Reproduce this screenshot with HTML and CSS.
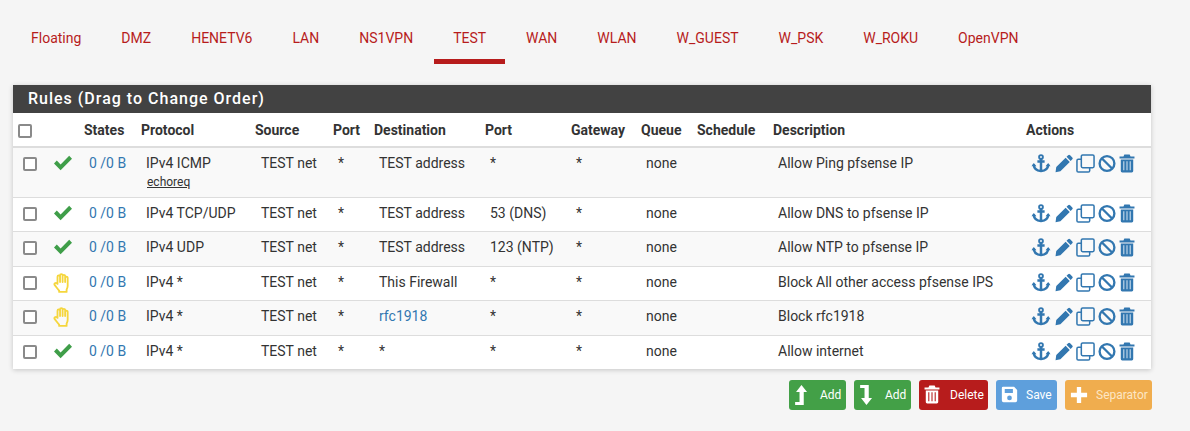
FILE: index.html
```html
<!DOCTYPE html>
<html lang="en">
<head>
<meta charset="UTF-8" />
<title>Firewall: Rules: TEST</title>
<link rel="stylesheet" href="styles.css">
</head>
<body>

<svg class="defs" width="0" height="0">
  <symbol id="i-check" viewBox="0 0 20 16"><path d="M1 8.5 L3.8 5.6 L7.6 9.4 L16.2 .8 L19 3.7 L7.6 15.2 Z"/></symbol>
  <symbol id="i-hand" viewBox="0 0 18 22"><path fill="none" stroke="currentColor" stroke-width="2" stroke-linejoin="round" stroke-linecap="round" d="M4.6 12 V4 a1.4 1.4 0 0 1 2.8 0 V2.6 a1.4 1.4 0 0 1 2.8 0 V3.4 a1.4 1.4 0 0 1 2.8 0 V5.4 a1.4 1.4 0 0 1 2.8 0 V14 c0 2 -.6 3 -1.2 4.4 V20.8 H6.4 V19.4 C4.6 17.4 3.2 15.4 1.6 13.4 C.4 11.8 2.6 10 4 11.4 L4.6 12 M7.4 4 V10 M10.2 3.4 V10 M13 4.4 V10"/></symbol>
  <symbol id="i-anchor" viewBox="0 0 20 20"><g fill="none" stroke="currentColor"><circle cx="10" cy="3.2" r="2" stroke-width="2"/><path stroke-width="2.6" d="M10 5 V18 M6.2 7.8 H13.8"/><path stroke-width="2.6" d="M2.4 11 C2.6 15.4 6 17.6 10 17.9 C14 17.6 17.4 15.4 17.6 11"/></g><path d="M0 13 L2.4 9.4 L5.2 13 Z M14.8 13 L17.6 9.4 L20 13 Z"/></symbol>
  <symbol id="i-pencil" viewBox="0 0 20 20"><path d="M14.6 .8 a1.6 1.6 0 0 1 2.2 0 L19.2 3.2 a1.6 1.6 0 0 1 0 2.2 L17.4 7.2 L12.8 2.6 Z M11.8 3.6 L16.4 8.2 L6 18.6 L.6 19.6 L1.4 14 Z"/></symbol>
  <symbol id="i-clone" viewBox="0 0 20 20"><g fill="none" stroke="currentColor" stroke-width="1.6"><rect x="5.6" y="1" width="13.4" height="13.4" rx="1.4"/><path d="M5.6 5.6 H2.4 A1.4 1.4 0 0 0 1 7 V17.6 A1.4 1.4 0 0 0 2.4 19 H13 A1.4 1.4 0 0 0 14.4 17.6 V14.4"/></g></symbol>
  <symbol id="i-ban" viewBox="0 0 20 20"><g fill="none" stroke="currentColor" stroke-width="2.6"><circle cx="10" cy="10" r="8.2"/><path d="M4.4 4.4 L15.6 15.6"/></g></symbol>
  <symbol id="i-trash" viewBox="0 0 18 20"><path d="M6 0 H12 L13 2 H17.4 V4.4 H.6 V2 H5 Z M2 5.4 H16 V18.4 A1.6 1.6 0 0 1 14.4 20 H3.6 A1.6 1.6 0 0 1 2 18.4 Z"/><path fill="#cfe0ef" d="M4.8 7.4 H6 V17.6 H4.8 Z M8.4 7.4 H9.6 V17.6 H8.4 Z M12 7.4 H13.2 V17.6 H12 Z"/></symbol>
  <symbol id="i-trash-btn" viewBox="0 0 18 20"><path d="M6 0 H12 L13 2 H17.4 V4.4 H.6 V2 H5 Z M2 5.4 H16 V18.4 A1.6 1.6 0 0 1 14.4 20 H3.6 A1.6 1.6 0 0 1 2 18.4 Z"/><path fill="#b71c1c" d="M4.8 7.4 H6 V17.6 H4.8 Z M8.4 7.4 H9.6 V17.6 H8.4 Z M12 7.4 H13.2 V17.6 H12 Z"/></symbol>
  <symbol id="i-up" viewBox="0 0 14 24"><path d="M7.5 1 L13.6 8.6 H10 V23 H.6 V19.6 H5.4 V8.6 H1.6 Z"/></symbol>
  <symbol id="i-down" viewBox="0 0 14 24"><path d="M.6 1 H10 V15.4 H13.6 L7.5 23 L1.6 15.4 H5.4 V4.4 H.6 Z"/></symbol>
  <symbol id="i-save" viewBox="0 0 20 20"><path fill-rule="evenodd" d="M2.4 1 H15.4 L19 4.6 V17 A2 2 0 0 1 17 19 H3 A2 2 0 0 1 1 17 V2.4 A1.4 1.4 0 0 1 2.4 1 Z M4.4 3.4 V8.2 H14 V3.4 Z M10 11.2 A2.8 2.8 0 1 0 10 16.8 A2.8 2.8 0 1 0 10 11.2 Z"/></symbol>
  <symbol id="i-plus" viewBox="0 0 20 20"><path d="M7.6 1 H12.4 V7.6 H19 V12.4 H12.4 V19 H7.6 V12.4 H1 V7.6 H7.6 Z"/></symbol>
</svg>

<nav class="tabs">
  <a href="#">Floating</a>
  <a href="#">DMZ</a>
  <a href="#">HENETV6</a>
  <a href="#">LAN</a>
  <a href="#">NS1VPN</a>
  <a href="#" class="active">TEST</a>
  <a href="#">WAN</a>
  <a href="#">WLAN</a>
  <a href="#">W_GUEST</a>
  <a href="#">W_PSK</a>
  <a href="#">W_ROKU</a>
  <a href="#">OpenVPN</a>
</nav>

<div class="container">
  <div class="panel">
    <h2 class="panel-title">Rules (Drag to Change Order)</h2>
    <table class="rules">
      <colgroup>
        <col class="c-sel"><col class="c-stat"><col class="c-states"><col class="c-proto"><col class="c-src">
        <col class="c-port"><col class="c-dest"><col class="c-dport"><col class="c-gw"><col class="c-queue">
        <col class="c-sched"><col class="c-desc"><col class="c-act">
      </colgroup>
      <thead>
        <tr>
          <th><span class="cb"></span></th>
          <th></th>
          <th>States</th>
          <th>Protocol</th>
          <th>Source</th>
          <th>Port</th>
          <th>Destination</th>
          <th>Port</th>
          <th>Gateway</th>
          <th>Queue</th>
          <th>Schedule</th>
          <th>Description</th>
          <th>Actions</th>
        </tr>
      </thead>
      <tbody id="rule-rows"></tbody>
    </table>
  </div>

  <div class="buttons">
    <a href="#" class="btn green"><svg class="ico-up"><use href="#i-up"/></svg>Add</a>
    <a href="#" class="btn green"><svg class="ico-up"><use href="#i-down"/></svg>Add</a>
    <a href="#" class="btn red"><svg class="ico-trash"><use href="#i-trash-btn"/></svg>Delete</a>
    <a href="#" class="btn blue"><svg class="ico-save"><use href="#i-save"/></svg>Save</a>
    <a href="#" class="btn orange"><svg class="ico-plus"><use href="#i-plus"/></svg>Separator</a>
  </div>
</div>

<script>
  const rules = [
    { ok: true, proto: "IPv4 ICMP", sub: "echoreq", dest: "TEST address", dport: "*", desc: "Allow Ping pfsense IP", tall: true },
    { ok: true, proto: "IPv4 TCP/UDP", dest: "TEST address", dport: "53 (DNS)", desc: "Allow DNS to pfsense IP" },
    { ok: true, proto: "IPv4 UDP", dest: "TEST address", dport: "123 (NTP)", desc: "Allow NTP to pfsense IP" },
    { ok: false, proto: "IPv4 *", dest: "This Firewall", dport: "*", desc: "Block All other access pfsense IPS" },
    { ok: false, proto: "IPv4 *", dest: "rfc1918", link: true, dport: "*", desc: "Block rfc1918" },
    { ok: true, proto: "IPv4 *", dest: "*", dport: "*", desc: "Allow internet" }
  ];

  const actions = ["anchor", "pencil", "clone", "ban", "trash"];
  const rowsEl = document.getElementById("rule-rows");

  rules.forEach(r => {
    const tr = document.createElement("tr");
    if (r.tall) tr.className = "tall";
    const status = r.ok
      ? '<svg class="ico-check"><use href="#i-check"/></svg>'
      : '<svg class="ico-hand"><use href="#i-hand"/></svg>';
    const sub = r.sub ? `<div class="sub">${r.sub}</div>` : "";
    const dest = r.link ? `<a href="#">${r.dest}</a>` : r.dest;
    tr.innerHTML = `
      <td><span class="cb"></span></td>
      <td class="status">${status}</td>
      <td><a href="#">0 /0 B</a></td>
      <td>${r.proto}${sub}</td>
      <td class="source">TEST net</td>
      <td>*</td>
      <td>${dest}</td>
      <td>${r.dport}</td>
      <td>*</td>
      <td>none</td>
      <td></td>
      <td>${r.desc}</td>
      <td class="actions"><div class="act-row">${actions.map(a => `<svg class="act act-${a}"><use href="#i-${a}"/></svg>`).join("")}</div></td>
    `;
    rowsEl.appendChild(tr);
  });
</script>

</body>
</html>
```

FILE: styles.css
```css
body {
  margin: 0;
  background: #f5f5f5;
  color: #333;
  font-family: Roboto, "Liberation Sans", sans-serif;
  font-size: 14px;
}
a {
  color: #3277b0;
  text-decoration: none;
}
.defs {
  position: absolute;
}

/* Tabs */
.tabs {
  display: flex;
  height: 64px;
  padding-left: 11px;
  box-sizing: border-box;
}
.tabs a {
  padding: 30px 20px 0;
  height: 64px;
  box-sizing: border-box;
  color: #b71c1c;
  line-height: 16px;
  white-space: nowrap;
}
.tabs a.active {
  padding: 30px 19px 0;
  margin: 0 1px;
  border-bottom: 5px solid #b71c1c;
}

.container {
  padding: 21px 39px 0 13px;
}

/* Panel */
.panel {
  background: white;
  box-shadow: 0 1px 5px rgb(0 0 0 / 0.2);
}
.panel-title {
  margin: 0;
  background: #424242;
  color: white;
  height: 28px;
  line-height: 28px;
  padding-left: 15px;
  font-size: 16px;
  font-weight: 500;
  letter-spacing: 1px;
}

.rules {
  width: 1138px;
  table-layout: fixed;
  border-collapse: collapse;
}
.c-sel { width: 35px; }
.c-stat { width: 31px; }
.c-states { width: 57px; }
.c-proto { width: 114px; }
.c-src { width: 78px; }
.c-port { width: 41px; }
.c-dest { width: 111px; }
.c-dport { width: 86px; }
.c-gw { width: 70px; }
.c-queue { width: 56px; }
.c-sched { width: 76px; }
.c-desc { width: 253px; }
.c-act { width: 130px; }

.rules th {
  height: 33px;
  padding: 0 0 0 5px;
  text-align: left;
  font-weight: 700;
  color: #333;
  border-bottom: 2px solid #ddd;
  white-space: nowrap;
}
.rules td {
  height: 34.5px;
  padding: 7px 0 0 10px;
  box-sizing: border-box;
  vertical-align: top;
  border-top: 1px solid #ddd;
  line-height: 17px;
  white-space: nowrap;
}
.rules tbody tr:first-child td {
  border-top: none;
}
.rules tbody tr:nth-child(odd) {
  background: #f9f9f9;
}
.rules tr.tall td {
  height: 50px;
}
.rules tbody tr:last-child td {
  height: 33.5px;
}
.rules td.source {
  padding-left: 11px;
}
.rules td.status {
  padding-left: 5px;
  padding-top: 7px;
}
.sub {
  margin-top: 3px;
  margin-left: 1px;
  font-size: 12px;
  line-height: 15px;
  text-decoration: underline;
}

.cb {
  display: inline-block;
  width: 10px;
  height: 10px;
  border: 2px solid #8a8a8a;
  border-radius: 2px;
  background: white;
  vertical-align: middle;
}

.ico-check {
  width: 20px;
  height: 16px;
  fill: #3f9e49;
}
.ico-hand {
  width: 17px;
  height: 20px;
  color: #f5d63d;
  margin-top: -1px;
}

.act-row {
  display: flex;
  align-items: center;
}
.rules td.actions {
  padding-top: 6px;
}
.act {
  width: 19px;
  height: 19px;
  fill: #3277b0;
  color: #3277b0;
  flex: none;
  margin-right: 3px;
}
.act-anchor { width: 20px; margin-right: 4px; }
.act-pencil { width: 18px; }
.act-clone { width: 19px; }
.act-ban { width: 18px; margin-right: 3px; }
.act-trash { width: 16px; }

/* Buttons */
.buttons {
  display: flex;
  justify-content: flex-end;
  gap: 8px;
  margin-top: 11px;
  margin-right: -1px;
}
.btn {
  display: flex;
  align-items: center;
  height: 30px;
  box-sizing: border-box;
  border-radius: 3px;
  color: white;
  font-size: 12px;
  padding-left: 5px;
}
.btn svg {
  fill: white;
  flex: none;
}
.green { background: #43a047; width: 57px; }
.red { background: #b71c1c; width: 69px; }
.blue { background: #5e9fdc; width: 61px; }
.orange { background: #f0ad4e; width: 87px; color: #fde6c4; }
.ico-up { width: 14px; height: 22px; margin-right: 12px; }
.ico-trash { width: 16px; height: 19px; margin-right: 10px; }
.ico-save { width: 17px; height: 17px; margin-right: 8px; }
.ico-plus { width: 18px; height: 18px; margin-right: 8px; }
```
